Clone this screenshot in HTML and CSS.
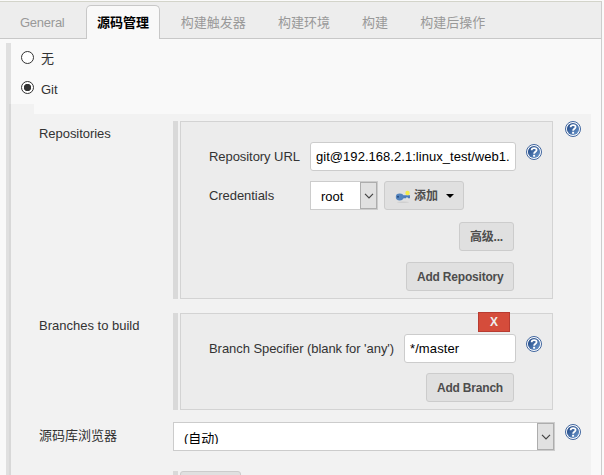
FILE: index.html
```
<!DOCTYPE html>
<html lang="zh-CN">
<head>
<meta charset="utf-8">
<title>源码管理</title>
<link rel="stylesheet" href="styles.css">
</head>
<body>
<svg class="defs" width="0" height="0" aria-hidden="true">
  <defs>
    <linearGradient id="blue" x1="0" y1="0" x2="1" y2="1"><stop offset="0" stop-color="#183f7d"/><stop offset="1" stop-color="#6f9bd0"/></linearGradient>
    <symbol id="help" viewBox="0 0 16 16">
      <circle cx="8" cy="8" r="7.5" fill="#fff" stroke="#3f659e" stroke-width="1"/>
      <circle cx="8" cy="8" r="6.1" fill="url(#blue)"/>
      <path d="M5.6 6.3C5.6 3.4 10.6 3.3 10.6 6C10.6 7.8 8.1 7.7 8.1 9.7" fill="none" stroke="#fff" stroke-width="1.8"/>
      <rect x="7.1" y="10.8" width="2" height="1.9" fill="#fff"/>
    </symbol>
    <symbol id="chevron" viewBox="0 0 10 6"><path d="M1 .8L5 4.8L9 .8" fill="none" stroke="#444" stroke-width="1.2"/></symbol>
  </defs>
</svg>
<main class="page">
  <nav class="tabs">
    <a class="tab general">General</a>
    <a class="tab active">源码管理</a>
    <a class="tab">构建触发器</a>
    <a class="tab">构建环境</a>
    <a class="tab">构建</a>
    <a class="tab">构建后操作</a>
  </nav>
  <section class="scm">
    <label class="choice"><span class="radio"></span><span>无</span></label>
    <label class="choice git"><span class="radio checked"></span><span>Git</span></label>
    <div class="nested">
      <div class="gutter"></div>
      <div class="settings">
        <div class="setting">
          <div class="name repos">Repositories</div>
          <div class="bar"></div>
          <div class="box repo-box">
            <div class="line">
              <span class="field-name url-name">Repository URL</span>
              <div class="input url"><div class="value">git@192.168.2.1:linux_test/web1.git</div></div>
              <svg class="help"><use href="#help"/></svg>
            </div>
            <div class="line credentials">
              <span class="field-name cred-name">Credentials</span>
              <div class="select small"><span>root</span><i class="arrow"><svg><use href="#chevron"/></svg></i></div>
              <div class="button add">
                <svg class="key" width="16" height="16" viewBox="0 0 16 16"><ellipse cx="8" cy="14.3" rx="6" ry=".8" fill="#cfcfcf"/><path d="M6 7.3H15V10.2H13V9.4H11V10.2H6Z" fill="#4d7db9"/><ellipse cx="4.7" cy="9" rx="3.9" ry="3.4" fill="#5484bd"/><circle cx="3" cy="8.8" r="1" fill="#244b82"/><circle cx="12.5" cy="5" r="2.2" fill="#f5ed48"/></svg>
                <span>添加</span><i class="caret"></i>
              </div>
            </div>
            <div class="actions"><div class="button advanced">高级...</div></div>
            <div class="actions"><div class="button add-repo">Add Repository</div></div>
          </div>
          <svg class="help outer"><use href="#help"/></svg>
        </div>
        <div class="setting branches">
          <div class="name">Branches to build</div>
          <div class="bar"></div>
          <div class="box branch-box">
            <div class="delete">X</div>
            <div class="line">
              <span class="field-name spec-name">Branch Specifier (blank for 'any')</span>
              <div class="input spec">*/master</div>
              <svg class="help"><use href="#help"/></svg>
            </div>
            <div class="actions"><div class="button add-branch">Add Branch</div></div>
          </div>
        </div>
        <div class="setting browser">
          <div class="name">源码库浏览器</div>
          <div class="select wide"><span class="auto">(自动)</span><i class="arrow"><svg><use href="#chevron"/></svg></i></div>
          <svg class="help outer"><use href="#help"/></svg>
        </div>
        <div class="setting more">
          <div class="name"></div><div class="bar"></div><div class="button"></div>
        </div>
      </div>
    </div>
  </section>
</main>
</body>
</html>
```
FILE: styles.css
```
* { box-sizing: border-box; }
body { margin: 0; height: 475px; overflow: hidden; background: #fafafa; color: #333; font: 13px/20px "Liberation Sans", "Noto Sans CJK SC", sans-serif; }
.defs { position: absolute; }
.page { width: 602px; height: 474px; margin-top: 1px; border-top: 1px solid #d3d4ca; border-right: 1px solid #ccc; background: #f9f9f9; overflow: hidden; }
.tabs { display: flex; height: 37px; padding: 3px 0 0 4px; background: #ededed; border-bottom: 1px solid #c8c8c8; }
.tab { height: 34px; padding: 8px 16px 0 16.2px; color: #999; white-space: nowrap; }
.general { width: 82px; padding-left: 16px; letter-spacing: -.25px; }
.active { width: 74px; margin-right: 4.5px; padding: 7px 0 0 10px; border: 1px solid #c8c8c8; border-bottom: 0; border-radius: 5px 5px 0 0; background: #f9f9f9; color: #000; font-weight: bold; }
.scm { height: 440px; margin: 4px 10px 0 6px; border-left: 5px solid #e0e0e0; }
.choice { display: flex; height: 30px; padding: 6px 0 0 10px; }
.choice.git { height: 31px; }
.radio { width: 13px; height: 13px; margin: 2px 7px 0 0; border: 1px solid #333; border-radius: 50%; background: #fff; }
.checked { background: radial-gradient(circle, #333 0 3.4px, #fff 4px); }
.git span + span { padding-top: 1px; }
.nested { display: flex; margin-left: -2px; }
.gutter { width: 25px; height: 380px; border-left: 2px solid #d8d8d8; background: #f2f2f2; }
.settings { width: 557px; height: 370px; margin-top: 10px; padding: 7px 0 0 5px; background: #f2f2f2; }
.setting { display: flex; }
.name { width: 134px; padding-top: 3px; }
.repos { letter-spacing: -.05px; }
.bar { width: 5px; margin-right: 2px; background: #d9d9d9; }
.box { width: 373px; border: 1px solid #d3d3d3; background: #ececec; }
.repo-box { height: 178px; padding: 20px 10px 0 28px; }
.branches { margin-top: 14px; }
.branch-box { position: relative; height: 97px; padding: 20px 10px 0 28px; }
.line { display: flex; height: 29px; align-items: center; }
.credentials { margin-top: 10px; }
.field-name { flex: none; white-space: nowrap; letter-spacing: -.06px; }
.url-name, .cred-name { width: 101px; }
.spec-name { width: 195px; }
.input { flex: none; height: 29px; padding: 4px 5px; border: 1px solid #ccc; border-radius: 3px; background: #fff; color: #000; white-space: nowrap; }
.url { width: 206px; }
.value { overflow: hidden; letter-spacing: .04px; }
.spec { width: 112px; letter-spacing: .1px; }
.help { flex: none; width: 16px; height: 16px; margin: -9px 0 0 10px; }
.outer { margin: 0 0 0 12px; }
.select { display: flex; flex: none; height: 29px; border: 1px solid #ccc; background: #fff; color: #000; }
.small { width: 68px; padding-left: 10px; line-height: 29px; }
.arrow { display: flex; align-items: center; justify-content: center; width: 17px; margin-left: auto; border: 1px solid #adadad; background: #e1e1e1; }
.arrow svg { width: 10px; height: 6px; }
.button { display: flex; align-items: center; height: 29px; padding: 0 10px; border: 1px solid #ccc; border-radius: 3px; background: #e0e0e0; color: #4d4d4d; font-size: 12px; font-weight: bold; white-space: nowrap; }
.add { width: 80px; margin-left: 6px; }
.key { flex: none; margin: 0 3px 0 0; }
.caret { flex: none; margin-left: 8px; border: 4px solid transparent; border-top-color: #000; border-bottom: 0; }
.actions { display: flex; justify-content: flex-end; margin: 12px 28px 0 0; }
.actions + .actions { margin-top: 11px; }
.advanced { width: 55px; letter-spacing: -.2px; }
.add-repo { width: 108px; letter-spacing: -.2px; }
.add-branch { width: 88px; letter-spacing: -.2px; }
.branch-box .actions { margin-top: 10px; }
.delete { position: absolute; top: -2px; right: 42px; width: 32px; height: 20px; border: 1px solid #b83b31; background: #d54c3b; color: #eee; font-size: 12px; font-weight: bold; line-height: 18px; text-align: center; }
.browser { margin-top: 12px; }
.browser .name { padding-top: 4px; }
.wide { width: 382px; }
.wide .arrow { height: 27px; }
.auto { height: 21px; padding: 6px 0 0 10px; overflow: hidden; }
.browser .outer { margin: 2px 0 0 10px; }
.more { margin-top: 20px; }
.more .button { width: 61px; }
```
